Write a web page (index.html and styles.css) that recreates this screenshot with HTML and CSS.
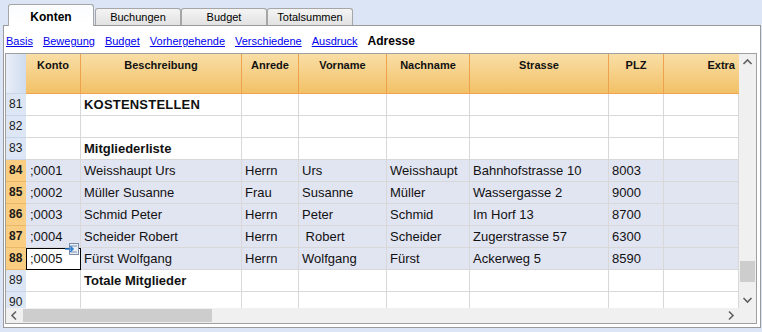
FILE: index.html
```html
<!DOCTYPE html>
<html lang="de">
<head>
<meta charset="UTF-8">
<title>Konten - Adresse</title>
<link rel="stylesheet" href="styles.css">
</head>
<body>
<div class="app">
    <div class="tabs">
        <div class="tab active">Konten</div>
        <div class="tab first">Buchungen</div>
        <div class="tab">Budget</div>
        <div class="tab">Totalsummen</div>
    </div>
    <div class="panel">
        <div class="views">
            <a href="#">Basis</a>
            <a href="#">Bewegung</a>
            <a href="#">Budget</a>
            <a href="#">Vorhergehende</a>
            <a href="#">Verschiedene</a>
            <a href="#">Ausdruck</a>
            <span class="current">Adresse</span>
        </div>
        <div class="sheet">
            <div class="sheet-main">
                <div class="grid">
                    <div class="row head">
                        <div class="num"></div>
                        <div class="c konto">Konto</div>
                        <div class="c besch">Beschreibung</div>
                        <div class="c anrede">Anrede</div>
                        <div class="c vorname">Vorname</div>
                        <div class="c nachname">Nachname</div>
                        <div class="c strasse">Strasse</div>
                        <div class="c plz">PLZ</div>
                        <div class="c extra">Extra</div>
                    </div>
                    <div class="row">
                        <div class="num">81</div>
                        <div class="c konto"></div>
                        <div class="c besch bold wide">KOSTENSTELLEN</div>
                        <div class="c anrede"></div><div class="c vorname"></div><div class="c nachname"></div>
                        <div class="c strasse"></div><div class="c plz"></div><div class="c extra"></div>
                    </div>
                    <div class="row">
                        <div class="num">82</div>
                        <div class="c konto"></div><div class="c besch"></div>
                        <div class="c anrede"></div><div class="c vorname"></div><div class="c nachname"></div>
                        <div class="c strasse"></div><div class="c plz"></div><div class="c extra"></div>
                    </div>
                    <div class="row">
                        <div class="num">83</div>
                        <div class="c konto"></div>
                        <div class="c besch bold">Mitgliederliste</div>
                        <div class="c anrede"></div><div class="c vorname"></div><div class="c nachname"></div>
                        <div class="c strasse"></div><div class="c plz"></div><div class="c extra"></div>
                    </div>
                    <div class="row member">
                        <div class="num">84</div>
                        <div class="c konto">;0001</div>
                        <div class="c besch">Weisshaupt Urs</div>
                        <div class="c anrede">Herrn</div>
                        <div class="c vorname">Urs</div>
                        <div class="c nachname">Weisshaupt</div>
                        <div class="c strasse">Bahnhofstrasse 10</div>
                        <div class="c plz">8003</div>
                        <div class="c extra"></div>
                    </div>
                    <div class="row member">
                        <div class="num">85</div>
                        <div class="c konto">;0002</div>
                        <div class="c besch">Müller Susanne</div>
                        <div class="c anrede">Frau</div>
                        <div class="c vorname">Susanne</div>
                        <div class="c nachname">Müller</div>
                        <div class="c strasse">Wassergasse 2</div>
                        <div class="c plz">9000</div>
                        <div class="c extra"></div>
                    </div>
                    <div class="row member">
                        <div class="num">86</div>
                        <div class="c konto">;0003</div>
                        <div class="c besch">Schmid Peter</div>
                        <div class="c anrede">Herrn</div>
                        <div class="c vorname">Peter</div>
                        <div class="c nachname">Schmid</div>
                        <div class="c strasse">Im Horf 13</div>
                        <div class="c plz">8700</div>
                        <div class="c extra"></div>
                    </div>
                    <div class="row member">
                        <div class="num">87</div>
                        <div class="c konto">;0004</div>
                        <div class="c besch">Scheider Robert</div>
                        <div class="c anrede">Herrn</div>
                        <div class="c vorname">&nbsp;Robert</div>
                        <div class="c nachname">Scheider</div>
                        <div class="c strasse">Zugerstrasse 57</div>
                        <div class="c plz">6300</div>
                        <div class="c extra"></div>
                    </div>
                    <div class="row member">
                        <div class="num">88</div>
                        <div class="c konto selected">;0005
                            <svg class="cell-icon" width="14" height="12" viewBox="0 0 14 12">
                                <rect x="4.5" y="0.5" width="9" height="11" fill="#e9eef6" stroke="#7d8ea8"/>
                                <line x1="6" y1="3" x2="12" y2="3" stroke="#7d8ea8"/>
                                <line x1="6" y1="9" x2="12" y2="9" stroke="#7d8ea8"/>
                                <path d="M0 6H8M5 3L8 6L5 9" fill="none" stroke="#2f7fd0" stroke-width="1.5"/>
                            </svg>
                        </div>
                        <div class="c besch">Fürst Wolfgang</div>
                        <div class="c anrede">Herrn</div>
                        <div class="c vorname">Wolfgang</div>
                        <div class="c nachname">Fürst</div>
                        <div class="c strasse">Ackerweg 5</div>
                        <div class="c plz">8590</div>
                        <div class="c extra"></div>
                    </div>
                    <div class="row">
                        <div class="num">89</div>
                        <div class="c konto"></div>
                        <div class="c besch bold">Totale Mitglieder</div>
                        <div class="c anrede"></div><div class="c vorname"></div><div class="c nachname"></div>
                        <div class="c strasse"></div><div class="c plz"></div><div class="c extra"></div>
                    </div>
                    <div class="row">
                        <div class="num">90</div>
                        <div class="c konto"></div><div class="c besch"></div>
                        <div class="c anrede"></div><div class="c vorname"></div><div class="c nachname"></div>
                        <div class="c strasse"></div><div class="c plz"></div><div class="c extra"></div>
                    </div>
                </div>
                <div class="vscroll">
                    <svg class="arrow" width="17" height="17" viewBox="0 0 17 17"><path d="M4.5 10L8.5 6L12.5 10" fill="none" stroke="#606060" stroke-width="1.6"/></svg>
                    <div class="vtrack"><div class="vthumb"></div></div>
                    <svg class="arrow" width="17" height="17" viewBox="0 0 17 17"><path d="M4.5 7L8.5 11L12.5 7" fill="none" stroke="#606060" stroke-width="1.6"/></svg>
                </div>
            </div>
            <div class="hbar">
                <div class="hscroll">
                    <svg class="arrow" width="17" height="15" viewBox="0 0 17 15"><path d="M10 3.5L6 7.5L10 11.5" fill="none" stroke="#606060" stroke-width="1.6"/></svg>
                    <div class="htrack"><div class="hthumb"></div></div>
                    <svg class="arrow" width="17" height="15" viewBox="0 0 17 15"><path d="M7 3.5L11 7.5L7 11.5" fill="none" stroke="#606060" stroke-width="1.6"/></svg>
                </div>
                <div class="corner"></div>
            </div>
        </div>
    </div>
</div>
</body>
</html>
```

FILE: styles.css
```css
body {
    margin: 0;
    padding: 0;
    background-color: #dbe5f6;
    font-family: "Liberation Sans", Arial, sans-serif;
    color: #000;
}
.app {
    width: 762px;
    height: 332px;
    padding-left: 3px;
    box-sizing: border-box;
}
.tabs {
    display: flex;
    align-items: flex-end;
    height: 25px;
    padding-left: 5px;
}
.tab {
    width: 86px;
    height: 17px;
    box-sizing: border-box;
    border: 1px solid #a6a6a6;
    border-bottom: none;
    border-radius: 3px 3px 0 0;
    background: linear-gradient(#f4f4f4, #e2e2e2);
    font-size: 11px;
    line-height: 16px;
    text-align: center;
    color: #000;
}
.tab.first {
    margin-left: 1px;
}
.tab.active {
    height: 22px;
    margin-bottom: -1px;
    position: relative;
    z-index: 1;
    background: linear-gradient(#fbfcfe, #ffffff);
    font-weight: bold;
    font-size: 12px;
    line-height: 24px;
}
.panel {
    width: 758px;
    height: 303px;
    box-sizing: border-box;
    border: 1px solid #9a9a9a;
    background-color: #fff;
    padding: 0 1px;
}
.views {
    display: flex;
    gap: 10px;
    height: 27px;
    box-sizing: border-box;
    padding: 9px 0 0 1px;
    font-size: 11px;
    line-height: 13px;
}
.views a {
    color: #0000ee;
}
.views .current {
    font-weight: bold;
    font-size: 12px;
}
.sheet {
    width: 752px;
    border: 1px solid #a0a0a0;
    box-sizing: border-box;
}
.sheet-main {
    display: flex;
    height: 254px;
}
.grid {
    width: 733px;
    overflow: hidden;
}
.row {
    display: flex;
    height: 22px;
}
.num {
    width: 20px;
    box-sizing: border-box;
    padding-left: 3px;
    background-color: #dde6f4;
    border-bottom: 1px solid #c7d3e6;
    font-size: 12px;
    line-height: 21px;
    color: #1a1a1a;
}
.c {
    box-sizing: border-box;
    border-right: 1px solid #d8d8d8;
    border-bottom: 1px solid #d8d8d8;
    padding-left: 3px;
    font-size: 13px;
    line-height: 21px;
    white-space: nowrap;
    overflow: hidden;
    color: #111;
}
.konto { width: 55px; padding-left: 4px; }
.besch { width: 161px; }
.anrede { width: 57px; }
.vorname { width: 88px; }
.nachname { width: 83px; }
.strasse { width: 139px; }
.plz { width: 55px; }
.extra { width: 75px; }

.bold {
    font-weight: bold;
}
.wide {
    letter-spacing: 0.2px;
}

.row.head {
    height: 40px;
}
.row.head .num {
    background: linear-gradient(90deg, #e9eff9, #cfdbee);
    border-bottom: 1px solid #c9d5e8;
}
.row.head .c {
    background: linear-gradient(#f9dea6, #f2c167);
    border-right: 1px solid #eea24e;
    border-bottom: 1px solid #eea24e;
    font-size: 11px;
    font-weight: bold;
    line-height: 14px;
    padding: 4px 0 0;
    text-align: center;
}
.row.head .extra {
    text-align: right;
    padding-right: 4px;
    border-right: none;
}

.row.member .c {
    background-color: #e1e4f1;
}
.row.member .num {
    background-color: #f9cd82;
    border-bottom: 1px solid #e8b868;
    font-weight: bold;
}
.row.member .c.selected {
    background-color: #fff;
    border: 1px solid #000;
    line-height: 19px;
    padding-left: 3px;
    overflow: visible;
    position: relative;
}
.cell-icon {
    position: absolute;
    top: -6px;
    right: 1px;
}

.vscroll {
    width: 17px;
    display: flex;
    flex-direction: column;
    background-color: #f0f0f0;
}
.arrow {
    display: block;
    flex: none;
}
.vtrack {
    flex: 1;
    position: relative;
}
.vthumb {
    position: absolute;
    left: 1px;
    right: 1px;
    top: 190px;
    height: 21px;
    background-color: #cdcdcd;
}
.hbar {
    display: flex;
    height: 15px;
}
.hscroll {
    width: 733px;
    display: flex;
    background-color: #f0f0f0;
}
.htrack {
    flex: 1;
}
.hthumb {
    width: 189px;
    height: 13px;
    margin: 1px 0 0 0;
    background-color: #cdcdcd;
}
.corner {
    flex: 1;
    background-color: #f0f0f0;
}
```
